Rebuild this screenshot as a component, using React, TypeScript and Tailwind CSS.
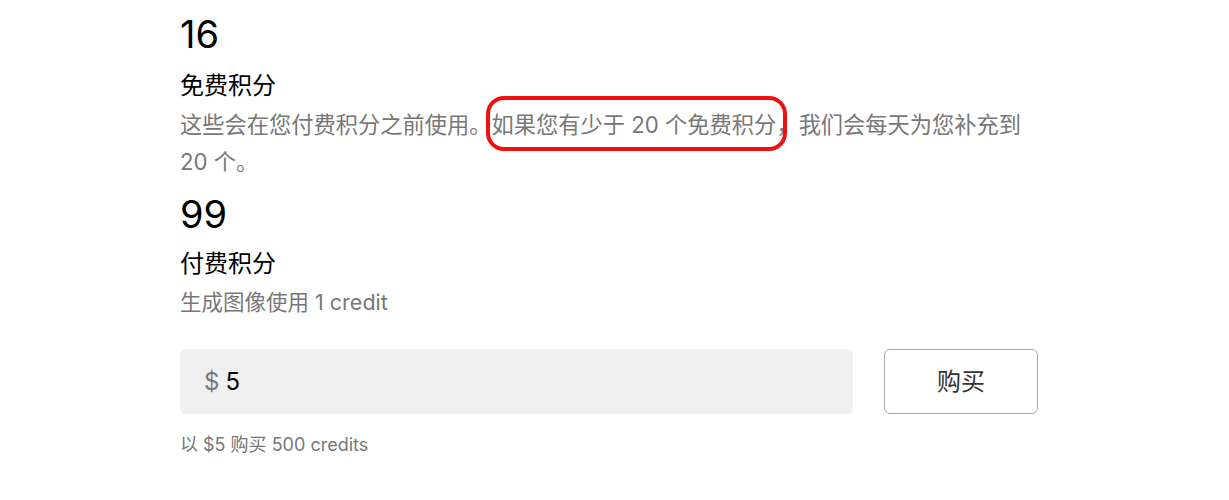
import React from "react";

const font = { fontFamily: '"Inter", "Noto Sans CJK SC", sans-serif' };

export default function App() {
  return (
    <div className="w-[1229px] h-[500px] bg-white overflow-hidden" style={font}>
      <div className="ml-[180px] w-[858px] pt-[12px]">
        <div className="text-[38px] leading-[44px] text-black">16</div>
        <div className="mt-[14px] text-[24px] leading-[32px] text-black">免费积分</div>
        <p className="mt-[4px] text-[22.25px] leading-[37px] text-[#777]">
          这些会在您付费积分之前使用。
          <span className="relative">
            如果您有少于 20 个免费积分，
            <span className="absolute left-[-6px] right-[12px] top-[-15px] bottom-[-13px] rounded-[18px] border-4 border-[#f01010]" />
          </span>
          我们会每天为您补充到 20 个。
        </p>
        <div className="mt-[12px] text-[38px] leading-[44px] text-black">99</div>
        <div className="mt-[12px] text-[24px] leading-[32px] text-black">付费积分</div>
        <div className="mt-[4px] text-[21.5px] leading-[36px] text-[#777]">生成图像使用 1 credit</div>
        <div className="mt-[29px] flex items-center gap-[31px]">
          <div className="flex-1 h-[65px] bg-[#f0f0f0] rounded-[5px] flex items-center pl-[24px] text-[24px]">
            <span className="text-[#777]">$</span>
            <span className="ml-[6px] text-black">5</span>
          </div>
          <button className="w-[154px] h-[65px] border border-[#aaa] rounded-[6px] bg-white text-[24px] text-[#333]">购买</button>
        </div>
        <div className="mt-[17px] text-[18px] leading-[28px] text-[#777]">以 $5 购买 500 credits</div>
      </div>
    </div>
  );
}
